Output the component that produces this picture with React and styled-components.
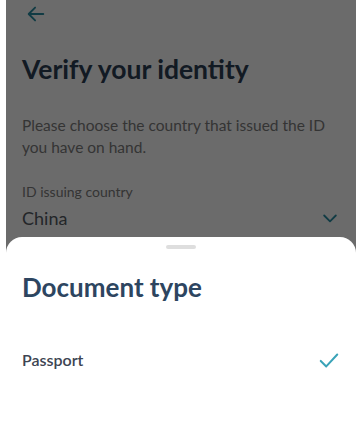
import React from "react";
import styled, { createGlobalStyle } from "styled-components";

const Global = createGlobalStyle`
  html, body { margin: 0; padding: 0; background: #ffffff; }
  body { font-family: "Lato", "Noto Sans", sans-serif; }
  * { box-sizing: border-box; }
`;

const Frame = styled.div`
  position: relative;
  width: 350px;
  height: 431px;
  margin: 0 0 0 6px;
  overflow: hidden;
  background: #ffffff;
`;

const Page = styled.div`
  display: flex;
  flex-direction: column;
  padding: 2px 16px 0 16px;
`;

const BackButton = styled.button`
  display: flex;
  align-items: center;
  justify-content: center;
  width: 24px;
  height: 24px;
  margin-left: 2px;
  padding: 0;
  border: 0;
  background: none;
  color: #2a8ea3;
`;

const Title = styled.h1`
  margin: 27px 0 0 0;
  font-size: 26.5px;
  line-height: 32px;
  font-weight: 700;
  color: #2d3e55;
`;

const Lead = styled.p`
  margin: 29px 0 0 0;
  font-size: 15.5px;
  line-height: 22px;
  color: #7d7d7d;
`;

const FieldLabel = styled.div`
  margin-top: 25px;
  font-size: 14px;
  line-height: 18px;
  color: #7d7d7d;
`;

const FieldRow = styled.div`
  display: flex;
  align-items: center;
  justify-content: space-between;
  margin-top: 5px;
  padding-right: 0;
  font-size: 18px;
  line-height: 24px;
  color: #555b63;
`;

const Overlay = styled.div`
  position: absolute;
  inset: 0;
  background: rgba(0, 0, 0, 0.58);
`;

const Sheet = styled.div`
  position: absolute;
  left: 0;
  right: 0;
  top: 237px;
  bottom: 0;
  background: #ffffff;
  border-radius: 16px 16px 0 0;
  display: flex;
  flex-direction: column;
  padding: 0 16px;
`;

const Handle = styled.div`
  align-self: center;
  width: 30px;
  height: 4px;
  margin-top: 8px;
  border-radius: 2px;
  background: #dedede;
`;

const SheetTitle = styled.h2`
  margin: 22px 0 0 0;
  font-size: 26px;
  line-height: 32px;
  font-weight: 700;
  color: #2d4560;
`;

const Option = styled.div`
  display: flex;
  align-items: center;
  justify-content: space-between;
  margin-top: 46px;
  padding-right: 0;
  font-size: 16px;
  line-height: 22px;
  font-weight: 600;
  color: #3d4452;
`;

export default function App() {
  return (
    <>
      <Global />
      <Frame>
        <Page>
          <BackButton aria-label="Back">
            <svg width="22" height="22" viewBox="0 0 24 24" fill="none" stroke="currentColor" strokeWidth="2" strokeLinecap="round" strokeLinejoin="round">
              <path d="M20 12H5" />
              <path d="M11 5l-7 7 7 7" />
            </svg>
          </BackButton>
          <Title>Verify your identity</Title>
          <Lead>Please choose the country that issued the ID you have on hand.</Lead>
          <FieldLabel>ID issuing country</FieldLabel>
          <FieldRow>
            <span>China</span>
            <svg width="20" height="20" viewBox="0 0 24 24" fill="none" stroke="#2a8ea3" strokeWidth="2.2" strokeLinecap="round" strokeLinejoin="round">
              <path d="M5 9l7 7 7-7" />
            </svg>
          </FieldRow>
        </Page>
        <Overlay />
        <Sheet>
          <Handle />
          <SheetTitle>Document type</SheetTitle>
          <Option>
            <span>Passport</span>
            <svg width="22" height="22" viewBox="0 0 24 24" fill="none" stroke="#3aa3b8" strokeWidth="2.2" strokeLinecap="round" strokeLinejoin="round">
              <path d="M3 13l6 6L21 6" />
            </svg>
          </Option>
        </Sheet>
      </Frame>
    </>
  );
}
